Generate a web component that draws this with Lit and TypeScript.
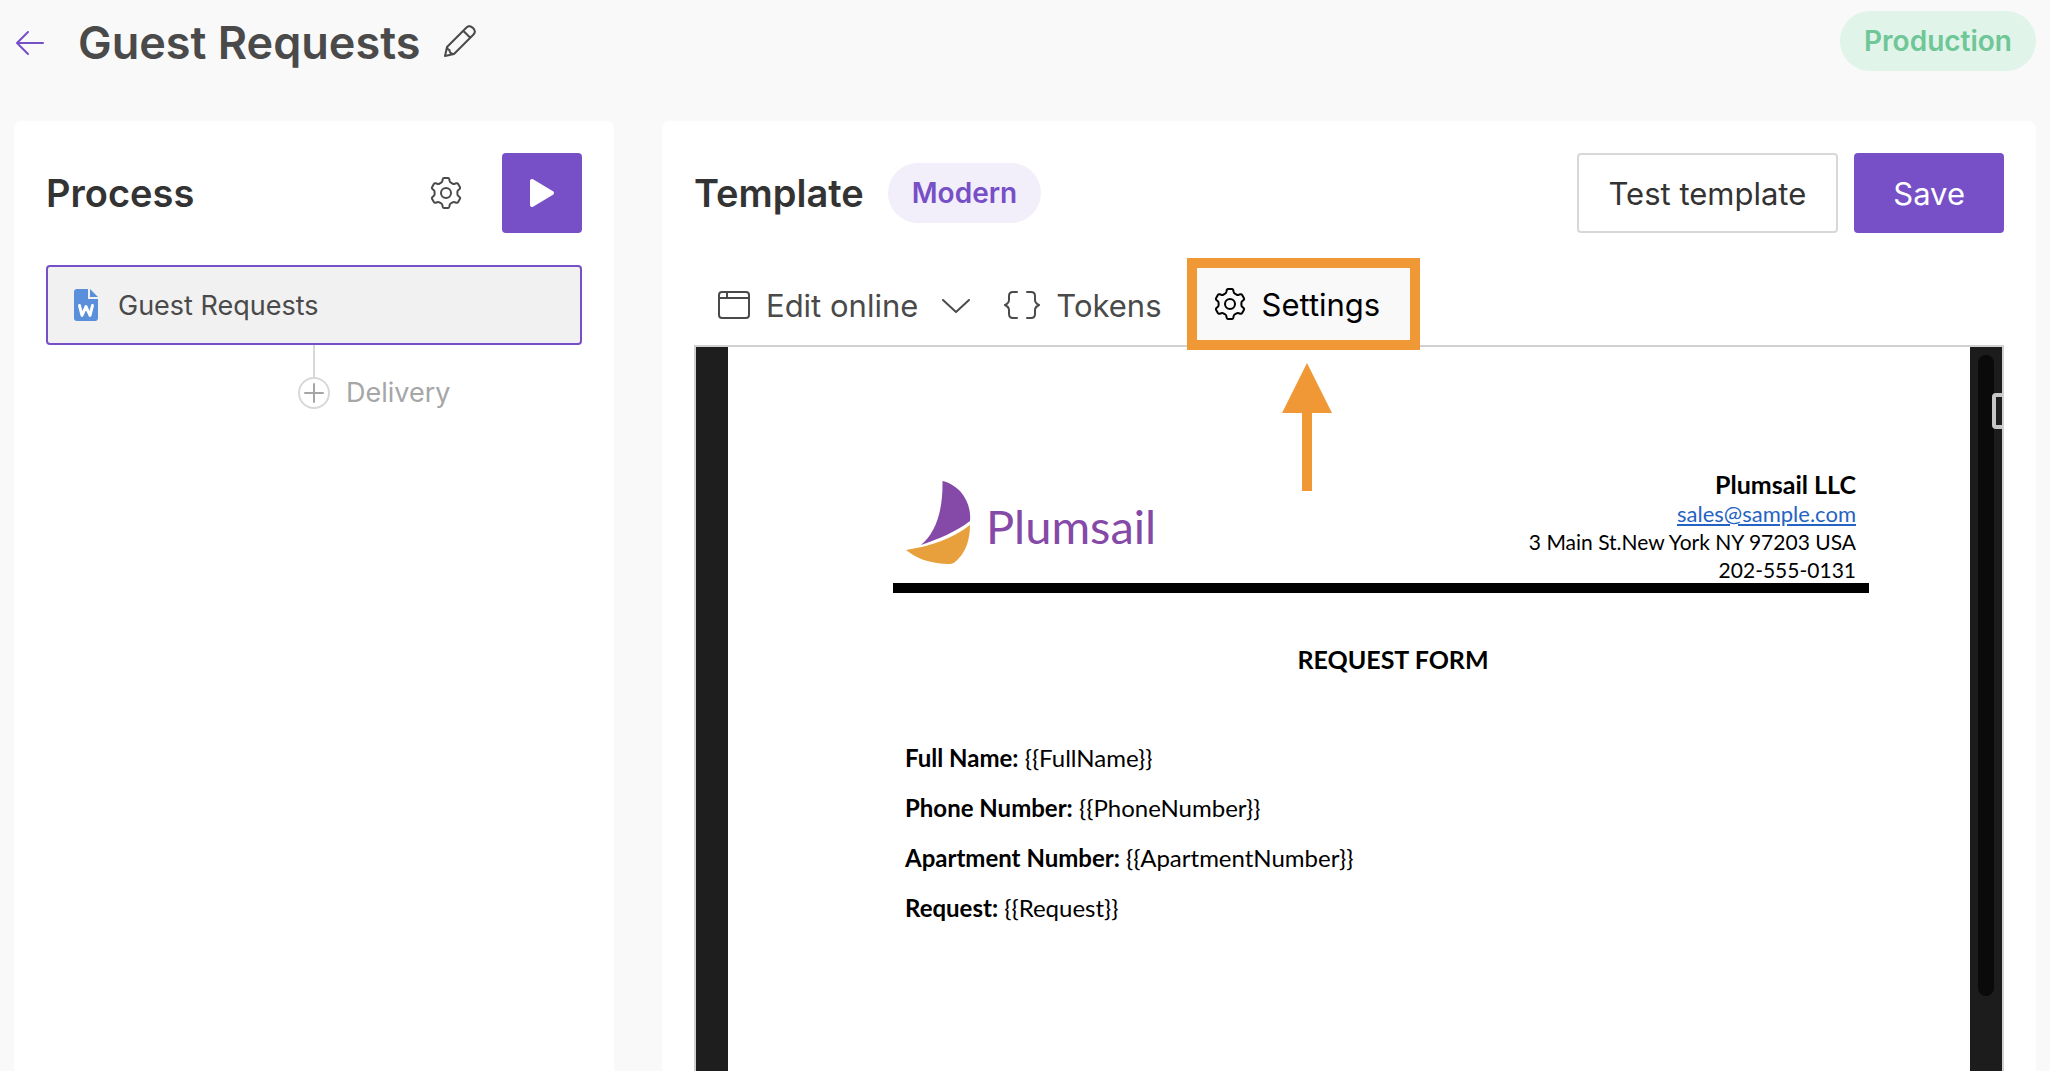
import { LitElement, html, css, svg } from "lit";
import { customElement } from "lit/decorators.js";

/** Outline of one gear tooth pointing up, relative to the gear centre. */
const tooth: [string, number[][]][] = [
  ["L", [[-4.8, -10.4]]],
  ["Q", [[-3.9, -10.8], [-3.6, -12.2]]],
  ["L", [[-3.3, -13.8]]],
  ["Q", [[-3, -15], [-2, -15]]],
  ["L", [[2, -15]]],
  ["Q", [[3, -15], [3.3, -13.8]]],
  ["L", [[3.6, -12.2]]],
  ["Q", [[3.9, -10.8], [4.8, -10.4]]],
];

const gearPath =
  [0, 1, 2, 3, 4, 5]
    .map((n) => {
      const c = Math.cos((n * Math.PI) / 3);
      const s = Math.sin((n * Math.PI) / 3);
      return tooth
        .map(([cmd, pts]) => cmd + pts.map(([x, y]) => `${(16 + x * c - y * s).toFixed(2)} ${(16 + x * s + y * c).toFixed(2)}`).join(" "))
        .join("");
    })
    .join("")
    .replace("L", "M") + "Z";

const gear = html`<svg class="icon" viewBox="0 0 32 32" aria-hidden="true">
  ${svg`<path d=${gearPath} /><circle cx="16" cy="16" r="5" />`}
</svg>`;

const fields = [
  ["Full Name:", "{{FullName}}"],
  ["Phone Number:", "{{PhoneNumber}}"],
  ["Apartment Number:", "{{ApartmentNumber}}"],
  ["Request:", "{{Request}}"],
];

@customElement("document-preview")
export class DocumentPreview extends LitElement {
  static styles = css`
    :host {
      display: flex;
      flex: 1;
      border: 2px solid #d1d1d1;
      border-bottom: 0;
      background: #1e1e1e;
      padding-left: 32px;
      font-family: Lato, "Liberation Sans", sans-serif;
      color: #000;
    }
    .page {
      flex: 1;
      background: #fff;
      padding: 121px 101px 0 165px;
    }
    .letterhead {
      display: flex;
      justify-content: space-between;
      align-items: flex-start;
      border-bottom: 10px solid #000;
      padding: 0 13px;
      height: 115px;
    }
    .logo {
      display: flex;
      align-items: center;
      gap: 14px;
      padding-top: 12px;
      color: #8549a7;
      font-size: 47px;
      line-height: 80px;
    }
    .logo span {
      padding-top: 6px;
    }
    .sail {
      width: 66px;
      height: 86px;
    }
    .contact {
      text-align: right;
      font-style: normal;
      font-size: 21px;
      line-height: 28px;
    }
    .company {
      display: block;
      font-size: 25px;
      line-height: 32px;
    }
    .contact a {
      color: #2463c4;
      font-size: 22px;
    }
    .line {
      display: block;
    }
    h3 {
      margin: 48px 0 56px 24px;
      text-align: center;
      font-size: 25px;
      line-height: 36px;
    }
    .field {
      margin: 0 0 0 12px;
      font-size: 24px;
      line-height: 50px;
    }
    .track {
      display: flex;
      flex-direction: column;
      position: relative;
      width: 32px;
      padding: 8px 8px 0;
      box-sizing: border-box;
      background: #1c1c1c;
      overflow: hidden;
    }
    .thumb {
      flex: 17;
      border-radius: 8px;
      background: #0a0a0a;
    }
    .rest {
      flex: 2;
    }
    .handle {
      position: absolute;
      top: 46px;
      left: 22px;
      width: 36px;
      height: 36px;
      padding: 0;
      border: 4px solid #c8c6c4;
      border-radius: 4px;
      background: #1e1e1e;
    }
  `;

  render() {
    return html`
      <article class="page">
        <header class="letterhead">
          <div class="logo">
            <svg class="sail" viewBox="0 0 66 86" aria-hidden="true">
              <path fill="#8549a7" d="M36.500 1C42 2 49 6 54 11C62 20 65 31 64 41C50 52 32 59 15 65C29 53 37 33 36.500 1Z" />
              <path fill="#e8a03c" d="M0 70C25 66 46 59 64 45C64 59 60 71 53 78C49 83 46 84.500 41 84C22 83 10 78 0 70Z" />
            </svg>
            <span>Plumsail</span>
          </div>
          <address class="contact">
            <strong class="company">Plumsail LLC</strong>
            <a href="mailto:sales@sample.com">sales@sample.com</a>
            <span class="line">3 Main St.New York NY 97203 USA</span>
            <span class="line">202-555-0131</span>
          </address>
        </header>
        <h3>REQUEST FORM</h3>
        ${fields.map(([label, token]) => html`<p class="field"><strong>${label}</strong> ${token}</p>`)}
      </article>
      <div class="track">
        <div class="thumb"></div>
        <div class="rest"></div>
        <button class="handle" aria-label="Toggle pane"></button>
      </div>
    `;
  }
}

@customElement("app-root")
export class AppRoot extends LitElement {
  static styles = css`
    :host {
      display: flex;
      flex-direction: column;
      min-height: 100vh;
      box-sizing: border-box;
      padding: 0 14px;
      background: #f9f9f9;
      font-family: Inter, "Liberation Sans", sans-serif;
      color: #333;
    }
    h1,
    h2 {
      margin: 0;
      font-weight: 600;
    }
    button {
      font: inherit;
      color: inherit;
      background: none;
      border: 0;
      padding: 0;
      display: flex;
      align-items: center;
    }
    .icon {
      display: block;
      flex: none;
      width: 32px;
      height: 32px;
      fill: none;
      stroke: currentColor;
      stroke-width: 2;
      stroke-linejoin: round;
      stroke-linecap: round;
    }
    .topbar {
      display: flex;
      align-items: center;
      height: 86px;
      margin-bottom: 35px;
    }
    .back {
      color: #774fc6;
      margin-right: 32px;
    }
    h1 {
      font-size: 45px;
      line-height: 60px;
      color: #4a4a4a;
      margin-right: 24px;
    }
    .edit {
      margin-bottom: 4px;
      color: #4a4a4a;
    }
    .pill {
      border-radius: 30px;
      padding: 0 24px;
      font-size: 28px;
      line-height: 60px;
      font-weight: 600;
    }
    .production {
      margin: 0 0 4px auto;
      background: #e0f4e9;
      color: #6fc696;
    }
    .modern {
      margin-left: 24px;
      background: #f2eefa;
      color: #774fc6;
    }
    .columns {
      flex: 1;
      display: grid;
      grid-template-columns: 600px minmax(0, 1fr);
      gap: 48px;
    }
    .panel {
      display: flex;
      flex-direction: column;
      padding: 32px 32px 0;
      border-radius: 8px 8px 0 0;
      background: #fff;
    }
    .head {
      display: flex;
      align-items: center;
      height: 80px;
      margin-bottom: 32px;
    }
    h2 {
      font-size: 38px;
      line-height: 48px;
    }
    .gear {
      margin: 0 40px 0 auto;
      color: #4a4a4a;
    }
    .run {
      justify-content: center;
      width: 80px;
      height: 80px;
      border-radius: 4px;
      background: #774fc6;
      color: #fff;
    }
    .step {
      gap: 16px;
      height: 80px;
      padding: 0 22px;
      border: 2px solid #774fc6;
      border-radius: 4px;
      background: #f1f1f1;
      color: #4a4a4a;
      font-size: 27px;
    }
    .stem {
      align-self: center;
      width: 2px;
      height: 32px;
      background: #d8d8d8;
    }
    .delivery {
      gap: 16px;
      margin-left: 252px;
      font-size: 27px;
      line-height: 32px;
      color: #a6a6a6;
    }
    .outlined,
    .primary {
      justify-content: center;
      height: 80px;
      box-sizing: border-box;
      border-radius: 4px;
      font-size: 31px;
    }
    .outlined {
      margin-left: auto;
      padding: 0 30px;
      border: 2px solid #d8d8d8;
    }
    .primary {
      margin-left: 16px;
      padding: 0 39px;
      background: #774fc6;
      color: #fff;
    }
    .toolbar {
      display: flex;
      align-items: center;
      height: 80px;
      padding-left: 24px;
      font-size: 31px;
      color: #4a4a4a;
    }
    .tool {
      gap: 16px;
    }
    .chevron {
      margin-left: 6px;
    }
    .tokens {
      margin-left: 32px;
    }
    .tokens .icon {
      width: 36px;
    }
    .marked {
      position: relative;
      margin: 0 0 2px 25px;
    }
    .settings {
      position: relative;
      z-index: 1;
      height: 92px;
      padding: 0 30px 0 17px;
      border: 10px solid #f09836;
      box-sizing: border-box;
      background: #f9f9f9;
      color: #000;
    }
    .arrow {
      position: absolute;
      z-index: 1;
      top: 105px;
      left: 95px;
      width: 50px;
      height: 128px;
      fill: #f09836;
    }
  `;

  render() {
    return html`
      <header class="topbar">
        <button class="back" aria-label="Back">
          <svg class="icon" viewBox="0 0 32 32"><path d="M29 16H3M14 5L3 16L14 27" /></svg>
        </button>
        <h1>Guest Requests</h1>
        <button class="edit" aria-label="Rename">
          <svg class="icon" viewBox="0 0 32 32">
            <path d="M1 31L3 22L22.500 2.500Q25.500 -.5 29 3Q32.500 6.500 29.500 9.500L10 29ZM19.500 6L26 12.500M3 22C3.500 24 4 25 5.500 25C5.500 27.500 7.500 29 10 29" />
          </svg>
        </button>
        <span class="pill production">Production</span>
      </header>
      <main class="columns">
        <section class="panel">
          <div class="head">
            <h2>Process</h2>
            <button class="gear" aria-label="Process settings">${gear}</button>
            <button class="run" aria-label="Run">
              <svg class="icon" viewBox="0 0 32 32"><path fill="currentColor" stroke-width="4" d="M6 4v24L26 16z" /></svg>
            </button>
          </div>
          <button class="step">
            <svg class="icon" viewBox="0 0 32 32">
              <path fill="#5a8fdc" stroke="none" d="M7 0h11v10h10v19q0 3-3 3H7q-3 0-3-3V3q0-3 3-3zM20 0l8 8h-8z" />
              <path stroke="#fff" stroke-width="3" d="M9.500 16.500l2.500 10 4-9 4 9 2.500-10" />
            </svg>
            Guest Requests
          </button>
          <span class="stem"></span>
          <button class="delivery">
            <svg class="icon" viewBox="0 0 32 32">
              <circle stroke="#d8d8d8" cx="16" cy="16" r="15" /><path d="M7 16h18M16 7v18" />
            </svg>
            Delivery
          </button>
        </section>
        <section class="panel">
          <div class="head">
            <h2>Template</h2>
            <span class="pill modern">Modern</span>
            <button class="outlined">Test template</button>
            <button class="primary">Save</button>
          </div>
          <div class="toolbar">
            <button class="tool">
              <svg class="icon" viewBox="0 0 32 32"><rect x="1" y="3" width="30" height="26" rx="3" /><path d="M1 9h30M9 3v6" /></svg>
              Edit online
              <svg class="icon chevron" viewBox="0 0 32 32"><path d="M3 11l13 12 13-12" /></svg>
            </button>
            <button class="tool tokens">
              <svg class="icon" viewBox="0 0 36 32"><path d="M13 3h-4q-4 0-4 4v4q0 3-4 5q4 2 4 5v4q0 4 4 4h4M23 3h4q4 0 4 4v4q0 3 4 5q-4 2-4 5v4q0 4-4 4h-4" /></svg>
              Tokens
            </button>
            <div class="marked">
              <button class="tool settings">${gear} Settings</button>
              <svg class="arrow" viewBox="0 0 50 128" aria-hidden="true"><path d="M25 0l25 50H30v78H20V50H0z" /></svg>
            </div>
          </div>
          <document-preview></document-preview>
        </section>
      </main>
    `;
  }
}
